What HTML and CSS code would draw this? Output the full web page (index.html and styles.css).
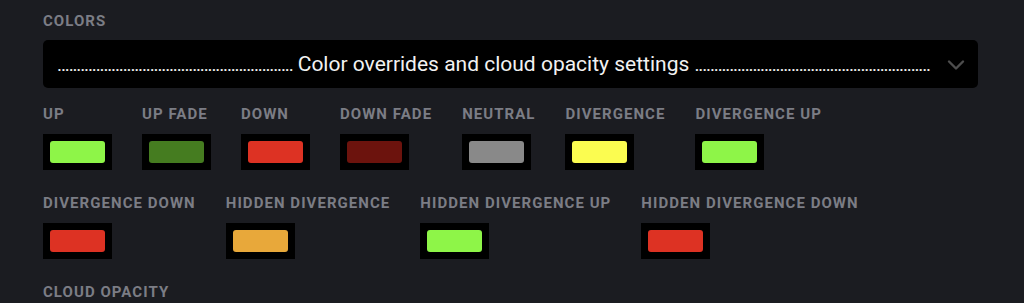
FILE: index.html
```html
<!DOCTYPE html>
<html lang="en">
<head>
  <meta charset="UTF-8">
  <title>Colors</title>
  <link rel="stylesheet" href="styles.css">
</head>
<body>
  <div class="panel">
    <div class="section-title">Colors</div>
    <div class="select">
      <span class="select-text"><span class="dots">.............................................................</span> Color overrides and cloud opacity settings <span class="dots">.............................................................</span></span>
      <svg class="chevron" width="18" height="12" viewBox="0 0 18 12"><path d="M2 2.5 L9 9.5 L16 2.5" fill="none" stroke="#4d4d4d" stroke-width="2.4" stroke-linecap="round" stroke-linejoin="round"/></svg>
    </div>

    <div class="color-row">
      <div class="color-item"><div class="label">Up</div><div class="swatch"><div class="chip" style="background:#8ef548"></div></div></div>
      <div class="color-item"><div class="label">Up fade</div><div class="swatch"><div class="chip" style="background:#457c20"></div></div></div>
      <div class="color-item"><div class="label">Down</div><div class="swatch"><div class="chip" style="background:#dd3223"></div></div></div>
      <div class="color-item"><div class="label">Down fade</div><div class="swatch"><div class="chip" style="background:#6c130d"></div></div></div>
      <div class="color-item"><div class="label">Neutral</div><div class="swatch"><div class="chip" style="background:#898989"></div></div></div>
      <div class="color-item"><div class="label">Divergence</div><div class="swatch"><div class="chip" style="background:#fbfc50"></div></div></div>
      <div class="color-item"><div class="label">Divergence up</div><div class="swatch"><div class="chip" style="background:#8ef548"></div></div></div>
    </div>

    <div class="color-row">
      <div class="color-item"><div class="label">Divergence down</div><div class="swatch"><div class="chip" style="background:#dd3223"></div></div></div>
      <div class="color-item"><div class="label">Hidden divergence</div><div class="swatch"><div class="chip" style="background:#e8a83a"></div></div></div>
      <div class="color-item"><div class="label">Hidden divergence up</div><div class="swatch"><div class="chip" style="background:#8ef548"></div></div></div>
      <div class="color-item"><div class="label">Hidden divergence down</div><div class="swatch"><div class="chip" style="background:#dd3223"></div></div></div>
    </div>

    <div class="section-title">Cloud opacity</div>
  </div>
</body>
</html>
```

FILE: styles.css
```css
body {
  margin: 0;
  padding: 0;
  background-color: #1b1c21;
  font-family: Roboto, "Liberation Sans", sans-serif;
}

.panel {
  padding: 12px 46px 0 43px;
}

.section-title,
.color-item .label {
  color: #7b7d85;
  font-size: 15px;
  font-weight: 700;
  letter-spacing: 1.05px;
  text-transform: uppercase;
  line-height: 18px;
  white-space: nowrap;
}

.select {
  position: relative;
  height: 48px;
  margin: 10px 0 17px;
  background-color: #000;
  border-radius: 5px;
  display: flex;
  align-items: center;
  padding: 0 40px 0 6px;
}

.select-text {
  flex: 1;
  color: #f2f2f2;
  font-size: 21px;
  text-align: center;
  white-space: nowrap;
  overflow: hidden;
}

.select-text .dots {
  font-size: 19px;
  letter-spacing: -1.15px;
}

.chevron {
  position: absolute;
  right: 13px;
  top: 19px;
}

.color-row {
  display: flex;
  gap: 30px;
  margin-bottom: 24px;
}

.swatch {
  width: 55px;
  height: 22px;
  padding: 7px;
  margin-top: 11px;
  background-color: #000;
}

.chip {
  width: 100%;
  height: 100%;
  border-radius: 3px;
}
```
